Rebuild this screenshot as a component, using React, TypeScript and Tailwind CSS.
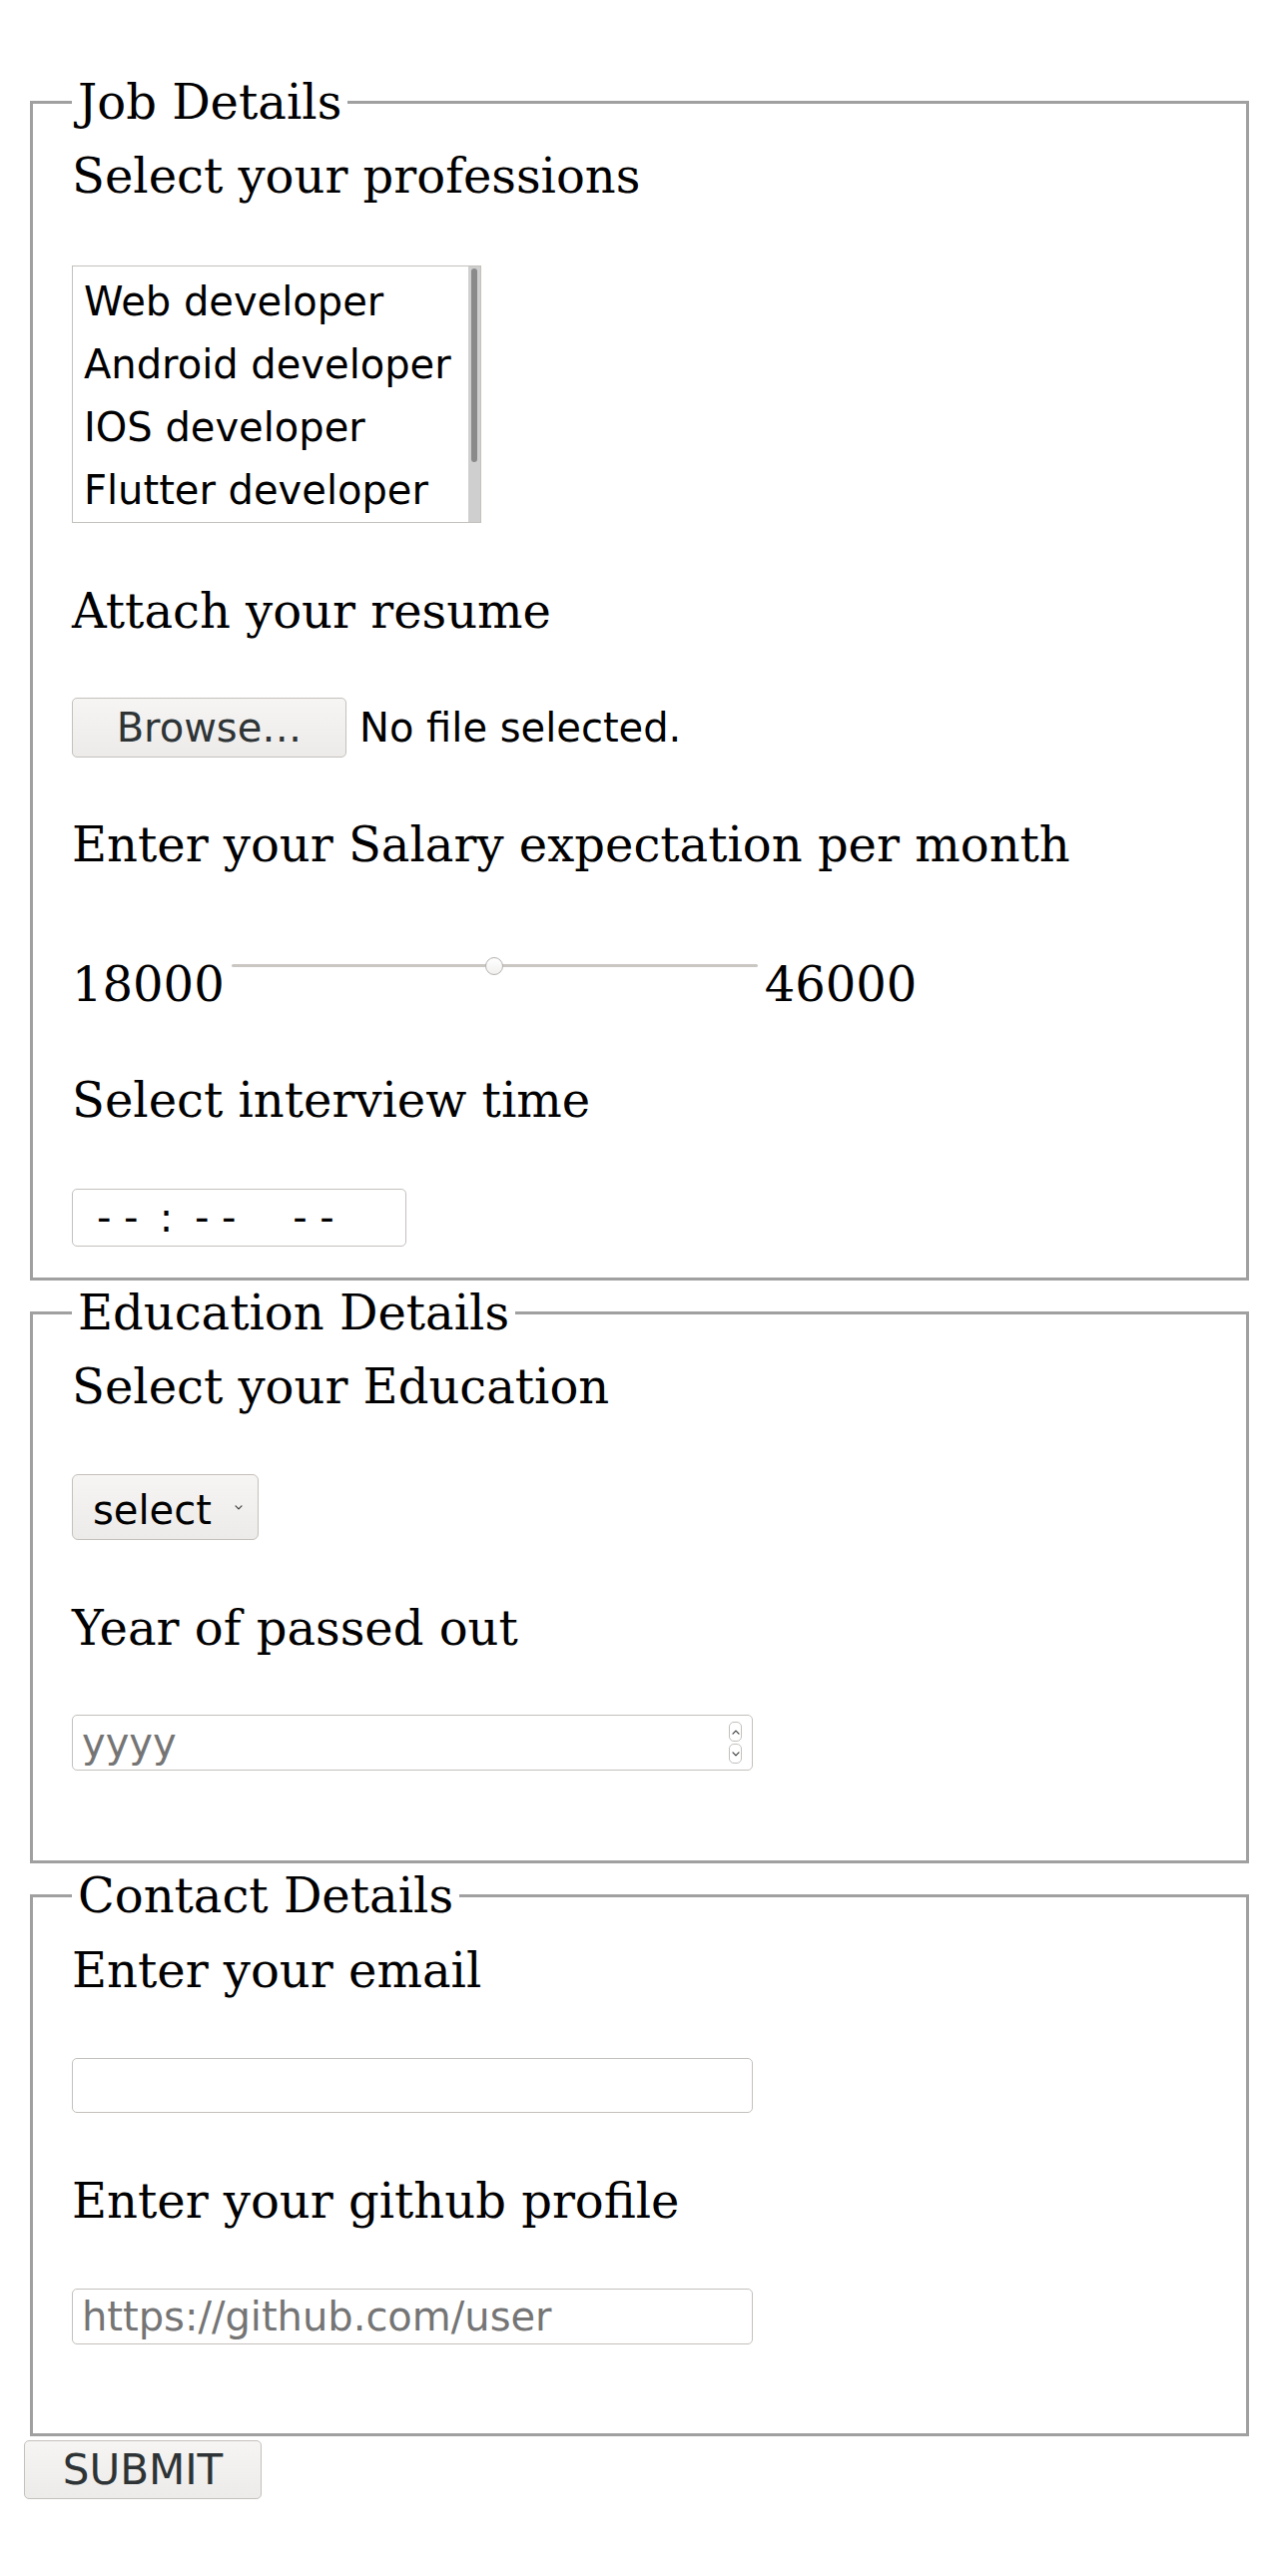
import React from "react";

const PROFESSIONS = [
  "Web developer",
  "Android developer",
  "IOS developer",
  "Flutter developer",
];

function Chevron({ up = false }: { up?: boolean }) {
  return (
    <svg width="8" height="5" viewBox="0 0 8 5" fill="none">
      <path
        d={up ? "M1 4.2 4 1.2 7 4.2" : "M1 0.8 4 3.8 7 0.8"}
        stroke="#3c3c3c"
        strokeWidth="1.2"
        strokeLinecap="round"
        strokeLinejoin="round"
      />
    </svg>
  );
}

export default function App() {
  return (
    <div className="min-h-screen bg-white px-[24px] pt-[74px] pb-[60px] font-['DejaVu_Serif',serif] text-[48px] leading-[56px] text-black">
      <form>
        {/* Job details */}
        <fieldset className="mx-[6px] mb-[4px] border-[3px] border-solid border-[#a0a0a0] px-[39px] pt-[18px] pb-[31px]">
          <legend className="px-[6px]">Job Details</legend>
          <label className="block">Select your professions</label>
          <div className="mt-[62px] flex h-[258px] w-[410px] border border-[#c4c0bc] bg-white font-['DejaVu_Sans',sans-serif] text-[40px]">
            <ul className="flex-1 pl-[11px] pt-[4px]">
              {PROFESSIONS.map((p) => (
                <li key={p} className="h-[63px] whitespace-nowrap leading-[63px]">
                  {p}
                </li>
              ))}
            </ul>
            <div className="flex w-[12px] justify-center bg-[#cfcfcf] pt-[2px]">
              <div className="h-[194px] w-[6px] rounded-full bg-[#8a8a8a]" />
            </div>
          </div>

          <label className="mt-[60px] block">Attach your resume</label>
          <div className="mt-[59px] flex items-center font-['DejaVu_Sans',sans-serif] text-[40px] leading-[46px]">
            <button
              type="button"
              className="h-[60px] w-[275px] rounded-[5px] border border-[#c4c0bc] bg-linear-to-b from-[#f6f5f4] to-[#edebe9] text-[#2e3436]"
            >
              Browse…
            </button>
            <span className="ml-[13px]">No file selected.</span>
          </div>

          <label className="mt-[59px] block">Enter your Salary expectation per month</label>
          <div className="mt-[84px] flex">
            <span>18000</span>
            <div className="relative h-[56px] w-[541px]">
              <div className="absolute left-[7px] right-[7px] top-[8px] h-[3px] rounded-full bg-[#cac6c2]" />
              <div className="absolute left-[261px] top-[1px] h-[18px] w-[18px] rounded-full border border-[#b6b2ae] bg-linear-to-b from-white to-[#f1f0ef]" />
            </div>
            <span>46000</span>
          </div>

          <label className="mt-[60px] block">Select interview time</label>
          <div className="mt-[61px] flex h-[58px] w-[335px] items-center rounded-[5px] border border-[#c4c0bc] pl-[24px] font-['DejaVu_Sans',sans-serif] text-[40px] leading-[46px]">
            <span className="tracking-[12.6px]">--</span>
            <span className="ml-[8.6px]">:</span>
            <span className="ml-[21.9px] tracking-[12.6px]">--</span>
            <span className="ml-[44px] tracking-[12.6px]">--</span>
          </div>
        </fieldset>

        {/* Education details */}
        <fieldset className="mx-[6px] mb-[4px] border-[3px] border-solid border-[#a0a0a0] px-[39px] pt-[18px] pb-[90px]">
          <legend className="px-[6px]">Education Details</legend>
          <label className="block">Select your Education</label>
          <div className="mt-[60px] flex h-[66px] w-[187px] items-center rounded-[6px] border border-[#c4c0bc] bg-linear-to-b from-[#f6f5f4] to-[#edebe9] pl-[20px] font-['DejaVu_Sans',sans-serif] text-[40px] leading-[46px]">
            <span className="mt-[6px]">select</span>
            <span className="ml-auto mr-[15px] flex">
              <Chevron />
            </span>
          </div>

          <label className="mt-[60px] block">Year of passed out</label>
          <div className="mt-[59px] flex h-[56px] w-[682px] items-center rounded-[5px] border border-[#c4c0bc] pl-[9px] pr-[10px]">
            <input
              type="text"
              placeholder="yyyy"
              className="min-w-0 flex-1 bg-transparent font-['DejaVu_Sans',sans-serif] text-[40px] leading-[46px] outline-none placeholder:text-[#757575]"
            />
            <div className="flex flex-col gap-[2px]">
              <span className="flex h-[20px] w-[13px] items-center justify-center rounded-[5px] border border-[#c4c0bc]">
                <Chevron up />
              </span>
              <span className="flex h-[20px] w-[13px] items-center justify-center rounded-[5px] border border-[#c4c0bc]">
                <Chevron />
              </span>
            </div>
          </div>
        </fieldset>

        {/* Contact details */}
        <fieldset className="mx-[6px] mb-[4px] border-[3px] border-solid border-[#a0a0a0] px-[39px] pt-[19px] pb-[89px]">
          <legend className="px-[6px]">Contact Details</legend>
          <label className="block">Enter your email</label>
          <input
            type="email"
            className="mt-[60px] block h-[55px] w-[682px] rounded-[5px] border border-[#c4c0bc] px-[9px] font-['DejaVu_Sans',sans-serif] text-[40px] outline-none"
          />
          <label className="mt-[60px] block">Enter your github profile</label>
          <input
            type="url"
            placeholder="https://github.com/user"
            className="mt-[60px] block h-[56px] w-[682px] rounded-[5px] border border-[#c4c0bc] px-[9px] font-['DejaVu_Sans',sans-serif] text-[40px] outline-none placeholder:text-[#757575]"
          />
        </fieldset>

        <button
          type="button"
          className="flex h-[59px] w-[238px] items-center justify-center rounded-[5px] border border-[#c4c0bc] bg-linear-to-b from-[#f6f5f4] to-[#edebe9] font-['DejaVu_Sans',sans-serif] text-[42px] leading-[49px] text-[#2e3436]"
        >
          SUBMIT
        </button>
      </form>
    </div>
  );
}
